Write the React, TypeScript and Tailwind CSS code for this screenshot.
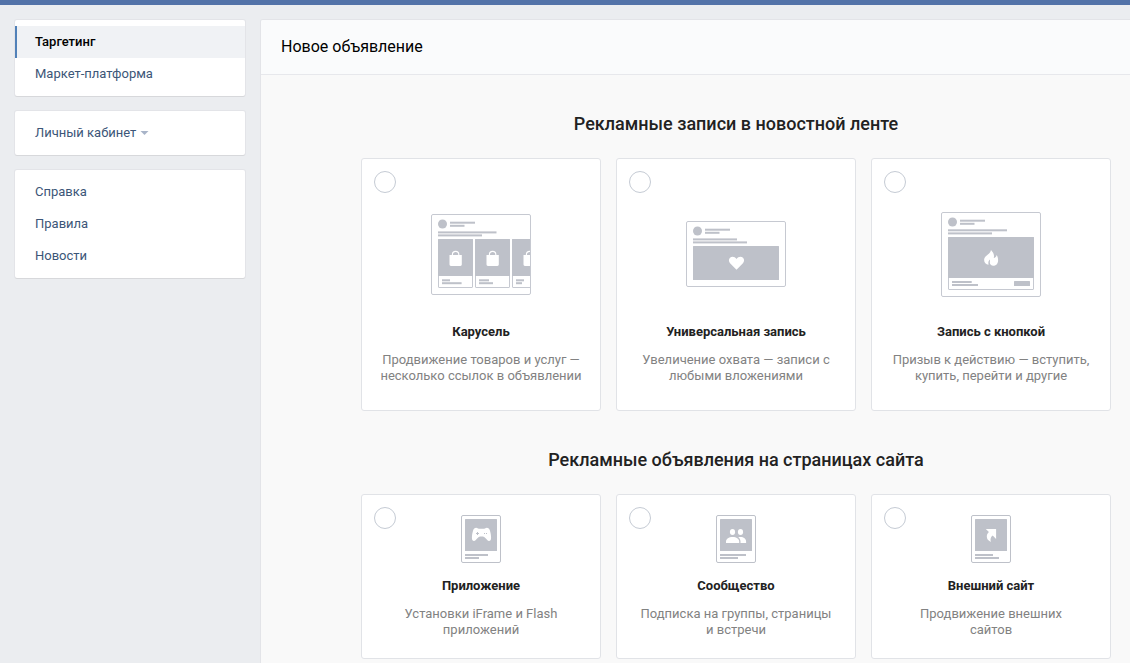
import type { ReactNode } from "react";

const GRAY = "#bec1c9";
const FRAME = "#c6c9d1";

function PostHeader() {
  return (
    <g fill={GRAY}>
      <circle cx="11.5" cy="10" r="4.5" />
      <rect x="19" y="7.7" width="25" height="2" />
      <rect x="19" y="10.8" width="14.5" height="2" />
    </g>
  );
}

function Bag({ x }: { x: number }) {
  return (
    <g transform={`translate(${x} 37)`}>
      <path d="M0 4h12.3v9.6a1.4 1.4 0 0 1-1.4 1.4H1.4A1.4 1.4 0 0 1 0 13.6z" fill="#fff" />
      <path d="M2.9 5V3.6a3.2 3.2 0 0 1 6.4 0V5" fill="none" stroke="#fff" strokeWidth="1.1" />
    </g>
  );
}

function Product({ x, first, second }: { x: number; first: number; second: number }) {
  return (
    <g>
      <rect x={x + 0.5} y="25.5" width="34" height="48" rx="0.5" fill="#fff" stroke={FRAME} />
      <rect x={x} y="25" width="35" height="37" rx="0.5" fill={GRAY} />
      <Bag x={x + 11.5} />
      <rect x={x + 4} y="65.3" width={first} height="2" fill={GRAY} />
      <rect x={x + 4} y="68.2" width={second} height="2" fill={GRAY} />
    </g>
  );
}

function CarouselArt() {
  return (
    <svg width="100" height="81" viewBox="0 0 100 81" aria-hidden="true">
      <defs>
        <clipPath id="carousel-frame">
          <rect x="0" y="0" width="99" height="81" />
        </clipPath>
      </defs>
      <rect x="0.5" y="0.5" width="99" height="80" rx="1.5" fill="#fff" stroke={FRAME} />
      <PostHeader />
      <rect x="7" y="17.4" width="58.5" height="2" fill={GRAY} />
      <rect x="7" y="20.4" width="44" height="2" fill={GRAY} />
      <g clipPath="url(#carousel-frame)">
        <Product x={7} first={8} second={19.6} />
        <Product x={44} first={10} second={14} />
        <Product x={81} first={8} second={6} />
      </g>
    </svg>
  );
}

function UniversalArt() {
  return (
    <svg width="100" height="66" viewBox="0 0 100 66" aria-hidden="true">
      <rect x="0.5" y="0.5" width="99" height="65" rx="1.5" fill="#fff" stroke={FRAME} />
      <PostHeader />
      <rect x="7" y="17.4" width="44" height="2" fill={GRAY} />
      <rect x="7" y="20.4" width="54" height="2" fill={GRAY} />
      <rect x="7" y="25" width="86" height="34" rx="0.5" fill={GRAY} />
      <path
        d="M50.5 48.8 44.3 42.6C42.5 40.6 42.5 38.2 44 36.8c1.8-1.7 4.8-1.3 6.5 1.2 1.7-2.5 4.7-2.9 6.5-1.2 1.5 1.4 1.5 3.8-.3 5.8z"
        fill="#fff"
      />
    </svg>
  );
}

function ButtonArt() {
  return (
    <svg width="100" height="85" viewBox="0 0 100 85" aria-hidden="true">
      <rect x="0.5" y="0.5" width="99" height="84" rx="1.5" fill="#fff" stroke={FRAME} />
      <PostHeader />
      <rect x="7" y="17.3" width="59" height="2" fill={GRAY} />
      <rect x="7" y="20.4" width="44" height="2" fill={GRAY} />
      <rect x="7.5" y="25.5" width="85" height="52" rx="0.5" fill="#fff" stroke={FRAME} />
      <rect x="7" y="25" width="86" height="41" rx="0.5" fill={GRAY} />
      <path
        d="M50 38c1.800 2 3 3.800 3 6.200 0 .8-.1 1.300-.3 1.900 1.600-.5 2.600-1.500 2.900-3.200 1.200 1.700 1.500 3.600 1.500 5.300 0 3.300-1.900 5.500-4.700 5.500-2.200 0-3.600-1.400-3.600-3.300 0-1 .3-1.700.2-2.800-1.500 1.100-2 2.900-1.400 5.200-2.700-.3-4.500-2.400-4.500-5.100 0-4.300 6.200-4.900 6.900-9.700z"
        fill="#fff"
      />
      <g fill={GRAY}>
        <rect x="11" y="69" width="19.7" height="2" />
        <rect x="11" y="72" width="26" height="2" />
        <rect x="73" y="69" width="16" height="5" rx="0.5" />
      </g>
    </svg>
  );
}

function SmallArt({ first, second, children }: { first: number; second: number; children: ReactNode }) {
  return (
    <svg width="40" height="48" viewBox="0 0 40 48" aria-hidden="true">
      <rect x="0.5" y="0.5" width="39" height="47" rx="1.5" fill="#fff" stroke={GRAY} />
      <rect x="4" y="4" width="32" height="32" rx="0.5" fill={GRAY} />
      <rect x="4" y="39" width={first} height="2" fill={GRAY} />
      <rect x="4" y="42" width={second} height="2" fill={GRAY} />
      {children}
    </svg>
  );
}

function AppArt() {
  return (
    <SmallArt first={23} second={14}>
      <path
        d="M15.200 12.800c1.200 0 1.600.9 2.600.9h5.400c1 0 1.400-.9 2.600-.9 1.600 0 2.500.8 3.100 2.600.7 2.200 1.200 4.800 1.200 7.300 0 2.100-.8 3.300-2.100 3.300-1.300 0-1.900-1-2.900-2.200-1.100-1.300-2-2.300-3.400-2.300h-2.400c-1.400 0-2.300 1-3.400 2.300-1 1.200-1.600 2.200-2.900 2.200-1.300 0-2.100-1.200-2.100-3.300 0-2.500.5-5.100 1.200-7.300.6-1.800 1.500-2.600 3.100-2.600z"
        fill="#fff"
      />
      <g fill={GRAY}>
        <rect x="16" y="17" width="1" height="3" />
        <rect x="15" y="18" width="3" height="1" />
        <rect x="23" y="18" width="1" height="1" />
        <rect x="25" y="18" width="1" height="1" />
      </g>
    </SmallArt>
  );
}

function CommunityArt() {
  return (
    <SmallArt first={26} second={18}>
      <g fill="#fff">
        <ellipse cx="16.5" cy="17" rx="2.6" ry="3" />
        <ellipse cx="24.5" cy="17" rx="2.6" ry="3" />
        <path d="M10 28v-1.600c0-2.600 2.800-4.500 6.600-4.500s6.600 1.900 6.600 4.500V28z" />
        <path d="M24.500 28v-1.400c0-1.900-.9-3.400-2.300-4.300.8-.3 1.500-.4 2.300-.4 3.300 0 5.600 1.900 5.600 4.500V28z" />
      </g>
    </SmallArt>
  );
}

function SiteArt() {
  return (
    <SmallArt first={18} second={24}>
      <path
        d="M14.800 14h10.300v10l-3.400-3.400c-1.800 1.300-2.700 3.200-1.900 6.300-2.600-1-4-3-4-5.300 0-1.700.8-3.200 2.100-4.500z"
        fill="#fff"
      />
    </SmallArt>
  );
}

type Format = { id: string; title: string; lines: [string, string]; art: ReactNode };

const feedFormats: Format[] = [
  { id: "carousel", title: "Карусель", lines: ["Продвижение товаров и услуг —", "несколько ссылок в объявлении"], art: <CarouselArt /> },
  { id: "universal", title: "Универсальная запись", lines: ["Увеличение охвата — записи с", "любыми вложениями"], art: <UniversalArt /> },
  { id: "button", title: "Запись с кнопкой", lines: ["Призыв к действию — вступить,", "купить, перейти и другие"], art: <ButtonArt /> },
];

const siteFormats: Format[] = [
  { id: "app", title: "Приложение", lines: ["Установки iFrame и Flash", "приложений"], art: <AppArt /> },
  { id: "community", title: "Сообщество", lines: ["Подписка на группы, страницы", "и встречи"], art: <CommunityArt /> },
  { id: "site", title: "Внешний сайт", lines: ["Продвижение внешних", "сайтов"], art: <SiteArt /> },
];

function FormatCard({ format, large }: { format: Format; large?: boolean }) {
  return (
    <label
      className={`relative flex cursor-pointer flex-col rounded-[3px] border border-[#e1e3e7] bg-white text-center ${
        large ? "pt-[27px] pb-[26px]" : "pt-5 pb-5"
      }`}
    >
      <input
        type="radio"
        name="format"
        value={format.id}
        className="absolute top-3 left-3 size-[22px] cursor-pointer appearance-none rounded-full border border-[#c5cbd4] bg-white checked:border-[6px] checked:border-[#5181b8]"
      />
      <span className={`flex items-center justify-center ${large ? "mb-0.5 h-[136px]" : "mb-[15px] h-12"}`}>
        {format.art}
      </span>
      <span className="font-bold text-[#222222]">{format.title}</span>
      <span className="mt-3 text-[#828282]">
        {format.lines[0]}
        <br />
        {format.lines[1]}
      </span>
    </label>
  );
}

function Section({ title, formats, large }: { title: string; formats: Format[]; large?: boolean }) {
  return (
    <section>
      <h2 className="mb-[22px] text-center text-[18px] leading-6 font-medium text-[#222222]">{title}</h2>
      <div className="grid grid-cols-3 gap-[15px]">
        {formats.map((format) => (
          <FormatCard key={format.id} format={format} large={large} />
        ))}
      </div>
    </section>
  );
}

function MenuLink({ active, children }: { active?: boolean; children: ReactNode }) {
  return (
    <a
      href="#"
      aria-current={active ? "page" : undefined}
      className={`flex h-8 items-center border-l-2 pl-[18px] ${
        active ? "border-[#5181b8] bg-[#f0f2f5] font-medium text-black" : "border-transparent text-[#3c5678]"
      }`}
    >
      {children}
    </a>
  );
}

function MenuBlock({ children }: { children: ReactNode }) {
  return (
    <div className="rounded-[2px] bg-white py-1.5 shadow-[0_1px_0_0_#d7d8db,0_0_0_1px_#e3e4e8]">{children}</div>
  );
}

export default function App() {
  return (
    <div className="flex min-h-screen flex-col bg-[#ebedf0] font-['Roboto',sans-serif] text-[13px] leading-4">
      <header className="h-[5px] bg-[#5272a8]" />
      <div className="flex grow pt-[15px] pl-[15px]">
        <nav className="mr-4 flex w-[230px] shrink-0 flex-col gap-[15px]">
          <MenuBlock>
            <MenuLink active>Таргетинг</MenuLink>
            <MenuLink>Маркет-платформа</MenuLink>
          </MenuBlock>
          <MenuBlock>
            <MenuLink>
              Личный кабинет
              <svg className="ml-1" width="9" height="4" viewBox="0 0 9 4" aria-hidden="true">
                <path d="M0.5 0h8L4.5 4z" fill="#a8b4c8" />
              </svg>
            </MenuLink>
          </MenuBlock>
          <MenuBlock>
            <MenuLink>Справка</MenuLink>
            <MenuLink>Правила</MenuLink>
            <MenuLink>Новости</MenuLink>
          </MenuBlock>
        </nav>
        <main className="grow rounded-tl-[2px] bg-[#f9f9f9] shadow-[0_0_0_1px_#e3e4e8]">
          <div className="flex h-[55px] items-center rounded-tl-[2px] border-b border-[#e7e8ec] bg-[#fafbfc] px-5">
            <h1 className="text-[16px] leading-5 text-black">Новое объявление</h1>
          </div>
          <div className="flex flex-col gap-[37px] pt-[37px] pr-[19px] pl-[100px]">
            <Section title="Рекламные записи в новостной ленте" formats={feedFormats} large />
            <Section title="Рекламные объявления на страницах сайта" formats={siteFormats} />
          </div>
        </main>
      </div>
    </div>
  );
}
